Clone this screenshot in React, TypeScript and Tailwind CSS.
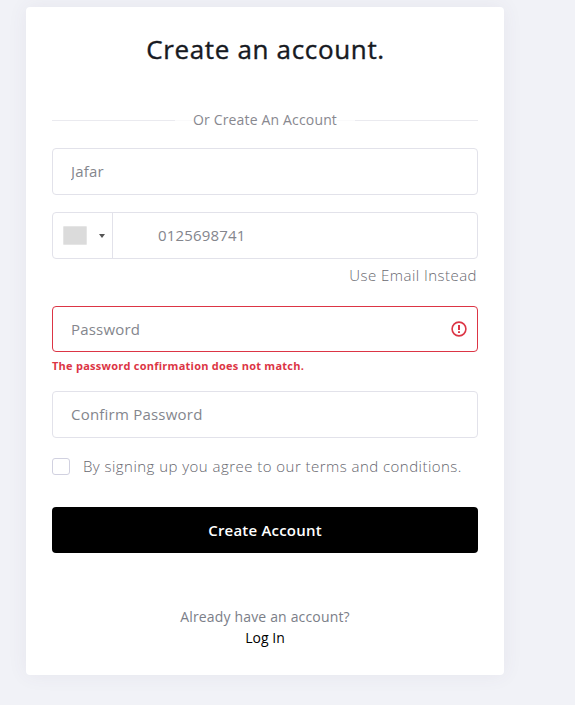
import { useState } from "react";

const field =
  "block h-[47px] w-full rounded-[4px] border border-[#e2e2ea] bg-white px-[18px] text-[15px] tracking-[0.22px] text-[#84868d] placeholder:text-[#84868d] outline-none";

function Divider({ label }: { label: string }) {
  return (
    <div className="mt-[37px] flex h-6 items-center text-[14px] tracking-[0.16px] text-[#88888f]">
      <span className="h-px w-[123px] bg-[#eaeaef]" />
      <span className="h-px flex-1 bg-[#fafafb]" />
      <span className="whitespace-nowrap pb-[2px]">{label}</span>
      <span className="h-px flex-1 bg-[#fafafb]" />
      <span className="h-px w-[123px] bg-[#eaeaef]" />
    </div>
  );
}

export default function App() {
  const [agreed, setAgreed] = useState(false);

  return (
    <div className="h-[705px] w-[575px] overflow-hidden bg-[#f1f2f7] pl-[26px] pt-[7px] font-['Open_Sans','Noto_Sans',sans-serif]">
      <form className="h-[668px] w-[478px] rounded-[4px] bg-white px-[26px] pt-[24px] shadow-[0_0_20px_rgba(89,66,120,0.07)]">
        <h1 className="h-10 pl-px text-center text-[26px] font-medium leading-[36px] tracking-[0.66px] text-[#171a22] [-webkit-text-stroke:0.4px_#171a22]">
          Create an account.
        </h1>
        <Divider label="Or Create An Account" />

        <input className={`${field} mt-[16px] pb-[2px] pt-px`} defaultValue="Jafar" aria-label="Name" />

        <div className="mt-[17px] flex h-[47px] overflow-hidden rounded-[4px] border border-[#e2e2ea]">
          <button type="button" aria-label="Country" className="flex w-[60px] items-center border-r border-[#e2e2ea] pl-[10px]">
            <span className="h-[19px] w-6 rounded-[1px] border border-[#e5e5e5] bg-[#dbdbdb]" />
            <svg className="ml-3 mt-px" width="6" height="4" viewBox="0 0 6 4">
              <path d="M0 0h6L3 4z" fill="#555" />
            </svg>
          </button>
          <input
            className="min-w-0 flex-1 pb-px pl-[45px] text-[15px] tracking-[0.17px] text-[#84868d] outline-none"
            defaultValue="0125698741"
            aria-label="Phone"
          />
        </div>
        <div className="flex h-[47px] justify-end pr-px pt-[5px] text-[15px] font-light leading-[22px] tracking-[0.46px] text-[#68686f]">
          <a>Use Email Instead</a>
        </div>

        <div className="flex h-[46px] items-center rounded-[4px] border border-[#dc3545] pl-[18px] pr-[10px]">
          <input
            className="min-w-0 flex-1 text-[15px] tracking-[0.2px] text-[#84868d] outline-none placeholder:text-[#84868d]"
            placeholder="Password"
            type="password"
          />
          <svg width="16" height="16" viewBox="0 0 16 16" fill="none">
            <circle cx="8" cy="8" r="6.9" stroke="#dc3545" strokeWidth="1.6" />
            <path d="M8 4v5M8 10.3V12" stroke="#dc3545" strokeWidth="2" />
          </svg>
        </div>
        <p className="mt-[5px] h-[18px] text-[11px] font-bold leading-[18px] tracking-[0.25px] text-[#dc3545]">
          The password confirmation does not match.
        </p>

        <input className={`${field} mt-[16px] pb-[2px] pt-px`} placeholder="Confirm Password" type="password" />

        <label className="mt-[16px] flex h-6 items-center text-[15px] font-light tracking-[0.46px] text-[#66666e]">
          <input
            type="checkbox"
            checked={agreed}
            onChange={(e) => setAgreed(e.target.checked)}
            className="mr-[13px] h-[17px] w-[18px] appearance-none rounded-[3px] border border-[#d1d1e0] bg-white checked:bg-black"
          />
          <span className="whitespace-nowrap">By signing up you agree to our terms and conditions.</span>
        </label>

        <button
          type="button"
          className="mt-[29px] block h-[46px] w-full rounded-[4px] bg-black text-[15px] font-semibold tracking-[0.2px] text-white"
        >
          Create Account
        </button>

        <div className="mt-[53px] text-center text-[14px] leading-[21px] tracking-[0.16px] text-[#7b7e88]">
          <p>Already have an account?</p>
          <a className="block tracking-normal text-black">Log In</a>
        </div>
      </form>
    </div>
  );
}
